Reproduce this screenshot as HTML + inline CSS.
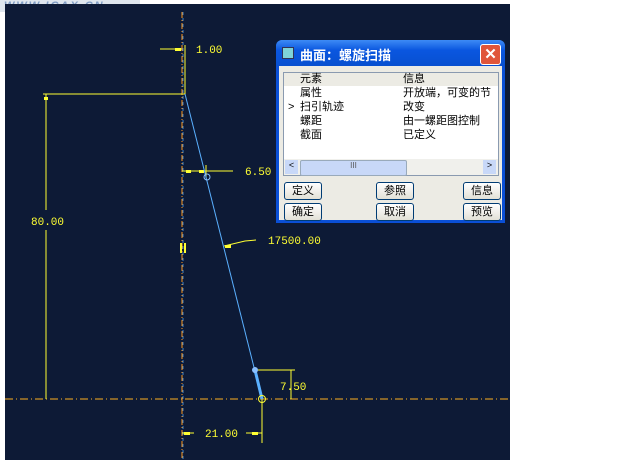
<!DOCTYPE html>
<html><head><meta charset="utf-8"><style>
body{margin:0;width:624px;height:460px;background:#fff;position:relative;overflow:hidden;font-family:"Liberation Sans","Noto Sans CJK SC",sans-serif}
#cv{position:absolute;left:5px;top:4px;width:505px;height:456px;background:#0d1a36}
.wm{position:absolute;left:0;top:0;width:140px;height:12px;background:#dfe6ee;font:bold italic 11px/12px "Liberation Sans",sans-serif;color:#7f9cc4;letter-spacing:2px;padding-left:4px;box-sizing:border-box}
svg{position:absolute;left:0;top:0}
.t{font-family:"Liberation Mono",monospace;font-size:11px;fill:#ffff33}
#dlg{position:absolute;left:276px;top:40px;width:229px;height:183px;background:#0a4fd6;border-radius:6px 6px 0 0}
#tb{position:absolute;left:0;top:0;width:229px;height:26px;background:linear-gradient(#3d8bf5,#0a56df 40%,#0850d0);border-radius:6px 6px 0 0;color:#fff;font-weight:bold;font-size:13px}
#body{position:absolute;left:3px;top:26px;width:223px;height:154px;background:#ecebe4}
#list{position:absolute;left:4px;top:6px;width:214px;height:102px;background:#fff;border:1px solid #8a9ab0;font-size:11px;color:#000}
.r{position:absolute;height:13px;line-height:13px;white-space:nowrap}
.btn{position:absolute;width:36px;height:16px;border:1px solid #003c74;border-radius:3px;background:linear-gradient(#fff,#e2e0d6);font-size:11px;line-height:16px;text-align:center;color:#000}
</style></head><body>
<div class="wm">WWW.ICAX.CN</div>
<div id="cv"></div>
<svg width="624" height="460">
<line x1="182" y1="12" x2="182" y2="460" stroke="#ff9a20" stroke-width="1" stroke-dasharray="6,2,1,2"/>
<line x1="183" y1="12" x2="183" y2="460" stroke="#5ab0ff" stroke-width="1" stroke-dasharray="3,3" opacity=".7"/>
<line x1="5" y1="399" x2="510" y2="399" stroke="#ffb020" stroke-width="1" stroke-dasharray="8,3,1,3"/>
<g stroke="#ffff33" stroke-width="1" fill="none">
<line x1="43" y1="94" x2="185" y2="94"/>
<line x1="46" y1="94" x2="46" y2="210"/><line x1="46" y1="230" x2="46" y2="399"/>
<line x1="185" y1="45" x2="185" y2="94"/>
<line x1="160" y1="49" x2="182" y2="49"/>
<line x1="182" y1="171" x2="233" y2="171"/>
<line x1="206" y1="165" x2="206" y2="178"/>
<polyline points="224,246 245,241 256,240"/>
<line x1="258" y1="370" x2="295" y2="370"/>
<line x1="291" y1="370" x2="291" y2="399"/>
<line x1="262" y1="399" x2="262" y2="443"/>
<line x1="182" y1="433" x2="194" y2="433"/><line x1="246" y1="433" x2="262" y2="433"/>
<line x1="181" y1="243" x2="181" y2="253" stroke-width="2"/><line x1="185" y1="243" x2="185" y2="253" stroke-width="2"/>
</g>
<g fill="#ffff33"><rect x="175" y="48" width="6" height="3"/><rect x="186" y="170" width="5" height="3"/><rect x="199" y="170" width="5" height="3"/><rect x="225" y="245" width="6" height="3"/><rect x="184" y="432" width="6" height="3"/><rect x="252" y="432" width="6" height="3"/><rect x="44" y="97" width="4" height="3"/></g>
<line x1="185" y1="94" x2="262" y2="399" stroke="#5ab0ff" stroke-width="1"/>
<line x1="255" y1="370" x2="262" y2="399" stroke="#5ab0ff" stroke-width="3"/>
<circle cx="207" cy="177" r="3" stroke="#8ac0ff" fill="none"/>
<circle cx="262" cy="399" r="3.5" stroke="#ffff33" fill="none"/>
<circle cx="255" cy="370" r="3" fill="#8ac0ff"/>
<text class="t" x="196" y="53">1.00</text>
<text class="t" x="245" y="175">6.50</text>
<text class="t" x="31" y="225">80.00</text>
<text class="t" x="268" y="244">17500.00</text>
<text class="t" x="280" y="390">7.50</text>
<text class="t" x="205" y="437">21.00</text>
</svg>
<div id="dlg">
<div id="tb"><div style="position:absolute;left:6px;top:7px;width:10px;height:10px;background:#7fd4d8;border:1px solid #335"></div><span style="position:absolute;left:24px;top:5px">曲面：螺旋扫描</span>
<div style="position:absolute;left:204px;top:4px;width:19px;height:19px;background:#e0553a;border:1px solid #fff;border-radius:3px;color:#fff;text-align:center;line-height:19px;font-size:15px">✕</div></div>
<div id="body">
<div id="list">
<div class="r" style="left:0;top:0;width:214px;background:#ecebe4"></div>
<div class="r" style="left:16px;top:0">元素</div><div class="r" style="left:119px;top:0">信息</div>
<div class="r" style="left:16px;top:14px">属性</div><div class="r" style="left:119px;top:14px">开放端，可变的节</div>
<div class="r" style="left:4px;top:28px">&gt;</div><div class="r" style="left:16px;top:28px">扫引轨迹</div><div class="r" style="left:119px;top:28px">改变</div>
<div class="r" style="left:16px;top:42px">螺距</div><div class="r" style="left:119px;top:42px">由一螺距图控制</div>
<div class="r" style="left:16px;top:56px">截面</div><div class="r" style="left:119px;top:56px">已定义</div>
<div style="position:absolute;left:0;top:86px;width:214px;height:16px;background:#f0f0ec"></div>
<div style="position:absolute;left:16px;top:87px;width:105px;height:14px;background:#c8d8f8;border:1px solid #9ab;border-radius:2px;font-size:8px;text-align:center;color:#555">III</div>
<div style="position:absolute;left:1px;top:87px;width:13px;height:14px;background:#c8d8f8;font-size:9px;text-align:center">&lt;</div>
<div style="position:absolute;left:199px;top:87px;width:13px;height:14px;background:#c8d8f8;font-size:9px;text-align:center">&gt;</div>
</div>
<div class="btn" style="left:5px;top:116px">定义</div>
<div class="btn" style="left:97px;top:116px">参照</div>
<div class="btn" style="left:184px;top:116px">信息</div>
<div class="btn" style="left:5px;top:137px">确定</div>
<div class="btn" style="left:97px;top:137px">取消</div>
<div class="btn" style="left:184px;top:137px">预览</div>
</div>
</div>
</body></html>
